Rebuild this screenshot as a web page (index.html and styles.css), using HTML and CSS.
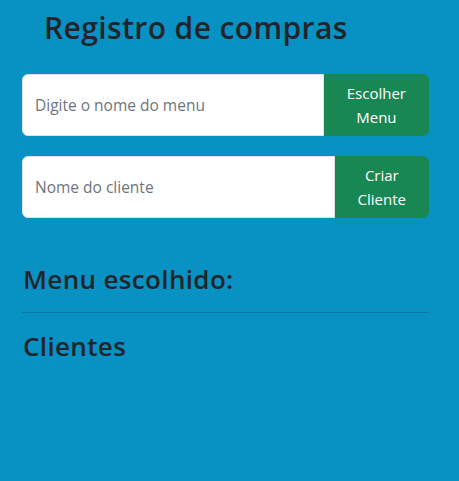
FILE: index.html
```html
<!DOCTYPE html>
<html lang="pt">
<head>
<meta charset="utf-8">
<link rel="stylesheet" href="styles.css">
</head>
<body>
<div class="container">
  <h1 class="title">Registro de compras</h1>
  <div class="input-group">
    <input class="field" type="text" placeholder="Digite o nome do menu">
    <button class="btn">Escolher Menu</button>
  </div>
  <div class="input-group">
    <input class="field" type="text" placeholder="Nome do cliente">
    <button class="btn">Criar Cliente</button>
  </div>
  <h2 class="section first">Menu escolhido:</h2>
  <hr class="divider">
  <h2 class="section">Clientes</h2>
</div>
</body>
</html>
```
FILE: styles.css
```css
html, body {
  margin: 0;
  padding: 0;
  background: #0891c3;
  height: 100%;
}
body {
  font-family: "Open Sans", "Noto Sans", sans-serif;
  color: #212529;
}
.container {
  padding: 0 30px 0 22px;
}
.title {
  font-size: 30px;
  font-weight: 600;
  line-height: 34px;
  margin: 0 0 0 22px;
  padding-top: 11px;
  letter-spacing: 0.4px;
}
.input-group {
  display: flex;
  align-items: stretch;
  margin-top: 20px;
}
.title + .input-group {
  margin-top: 29px;
}
.field {
  flex: 1;
  min-width: 0;
  border: 1px solid #dee2e6;
  border-radius: 6px 0 0 6px;
  padding: 6px 12px;
  font-family: inherit;
  font-size: 15.5px;
  color: #212529;
  background: #fff;
  outline: none;
}
.field::placeholder {
  color: #6c757d;
}
.btn {
  background: #198754;
  color: #fff;
  border: 1px solid #198754;
  border-radius: 0 6px 6px 0;
  padding: 6px 22px 6px 22px;
  font-family: inherit;
  font-size: 15px;
  line-height: 24px;
  width: min-content;
}
.section {
  font-size: 26px;
  font-weight: 600;
  line-height: 30px;
  margin: 0 0 8px 1px;
  letter-spacing: 0.35px;
}
.section.first {
  margin-top: 46px;
}
.divider {
  border: 0;
  border-top: 1px solid #212529;
  opacity: 0.25;
  margin: 18px 0 18px;
}
```
